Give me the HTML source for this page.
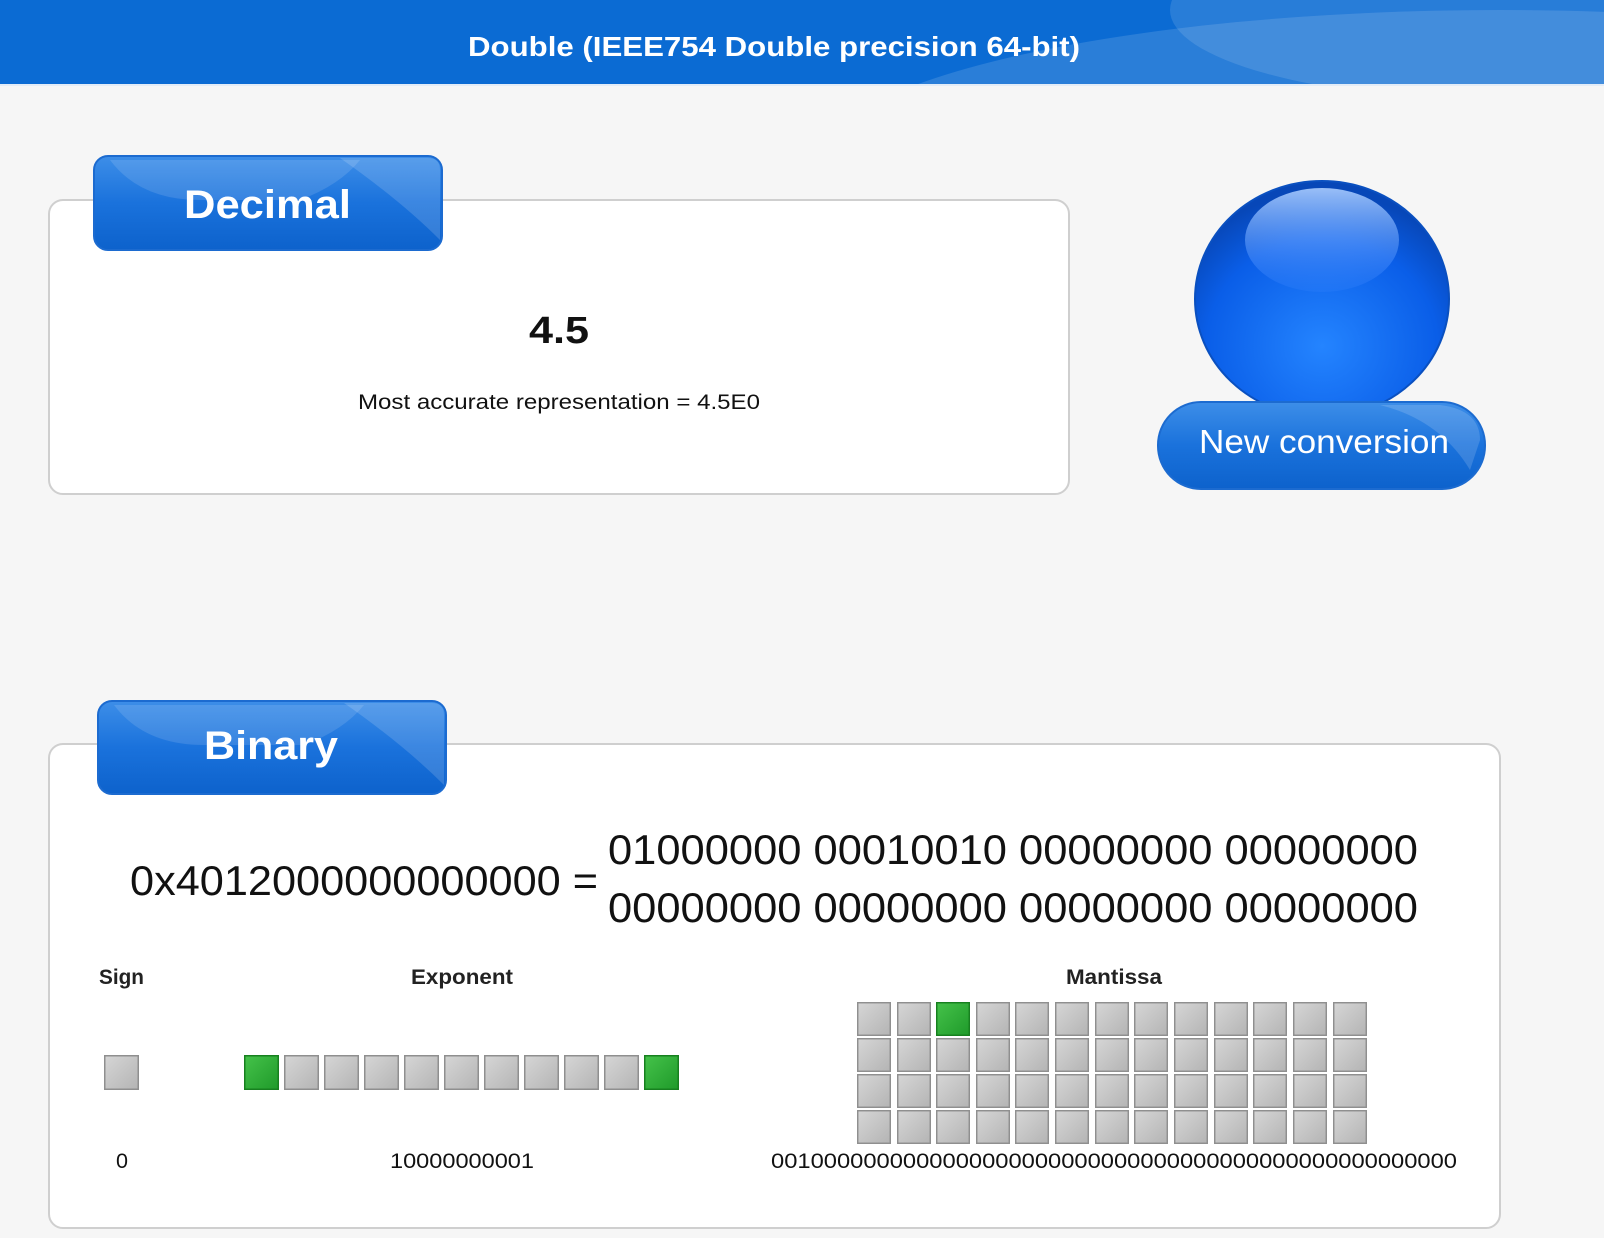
<!DOCTYPE html>
<html><head><meta charset="utf-8"><style>
html,body{margin:0;padding:0;background:#f6f6f6;}
svg{display:block}
text{font-family:"Liberation Sans",sans-serif;}
</style></head><body>
<svg width="1604" height="1238" viewBox="0 0 1604 1238" xmlns="http://www.w3.org/2000/svg">
<defs>
<clipPath id="hc"><rect x="0" y="0" width="1604" height="84"/></clipPath>
<linearGradient id="tab" x1="0" y1="0" x2="0" y2="1">
<stop offset="0" stop-color="#3d8ee8"/><stop offset="0.5" stop-color="#1a72dc"/><stop offset="1" stop-color="#0d62cc"/>
</linearGradient>
<radialGradient id="ball" cx="0.5" cy="0.7" r="0.65">
<stop offset="0" stop-color="#2484ff"/><stop offset="0.7" stop-color="#0a5ee8"/><stop offset="1" stop-color="#0747b8"/>
</radialGradient>
<linearGradient id="hl" x1="0" y1="0" x2="0" y2="1">
<stop offset="0" stop-color="#a9ccff" stop-opacity="0.9"/><stop offset="1" stop-color="#3b86ff" stop-opacity="0.2"/>
</linearGradient>
<linearGradient id="gray" x1="0" y1="0" x2="1" y2="1">
<stop offset="0" stop-color="#d6d6d6"/><stop offset="1" stop-color="#b4b4b4"/>
</linearGradient>
<linearGradient id="green" x1="0" y1="0" x2="1" y2="1">
<stop offset="0" stop-color="#45c24a"/><stop offset="1" stop-color="#1f9a2a"/>
</linearGradient>
<symbol id="g" viewBox="0 0 35 35"><rect x="0.75" y="0.75" width="33.5" height="33.5" fill="url(#gray)" stroke="#8f8f8f" stroke-width="1.5"/></symbol>
<symbol id="gr" viewBox="0 0 35 35"><rect x="0.75" y="0.75" width="33.5" height="33.5" fill="url(#green)" stroke="#17801f" stroke-width="1.5"/></symbol>
</defs>

<!-- header -->
<rect x="0" y="0" width="1604" height="84" fill="#0b6bd3"/>
<g clip-path="url(#hc)">
<ellipse cx="1500" cy="170" rx="690" ry="160" fill="#ffffff" opacity="0.13"/>
<ellipse cx="1500" cy="10" rx="330" ry="90" fill="#ffffff" opacity="0.12"/>
</g>
<rect x="0" y="84" width="1604" height="2" fill="#e3ecf7"/>
<text x="774" y="56" text-anchor="middle" font-size="28" font-weight="bold" fill="#fff" textLength="612" lengthAdjust="spacingAndGlyphs">Double (IEEE754 Double precision 64-bit)</text>

<!-- decimal box -->
<rect x="49" y="200" width="1020" height="294" rx="14" fill="#fff" stroke="#cfcfcf" stroke-width="2"/>
<rect x="94" y="156" width="348" height="94" rx="14" fill="url(#tab)" stroke="#1c6bd0" stroke-width="2"/>
<path d="M110 160 Q140 200 200 200 L300 200 Q340 185 360 160 Z" fill="#fff" opacity="0.12"/>
<path d="M340 158 Q400 200 440 240 L440 170 Q440 158 428 158 Z" fill="#fff" opacity="0.15"/>
<text x="184" y="218" font-size="40" font-weight="bold" fill="#fff" textLength="167" lengthAdjust="spacingAndGlyphs">Decimal</text>
<text x="529" y="343" font-size="38" font-weight="bold" fill="#111" textLength="60" lengthAdjust="spacingAndGlyphs">4.5</text>
<text x="358" y="409" font-size="21" fill="#111" textLength="402" lengthAdjust="spacingAndGlyphs">Most accurate representation = 4.5E0</text>

<!-- ball -->
<ellipse cx="1322" cy="299" rx="127" ry="118" fill="url(#ball)" stroke="#0a50c0" stroke-width="2"/>
<ellipse cx="1322" cy="240" rx="77" ry="52" fill="url(#hl)"/>
<rect x="1158" y="402" width="327" height="87" rx="43" fill="url(#tab)" stroke="#1c6bd0" stroke-width="2"/>
<path d="M1380 405 Q1440 420 1470 470 L1480 440 Q1480 410 1440 405 Z" fill="#fff" opacity="0.15"/>
<text x="1199" y="453" font-size="33" fill="#fff" textLength="250" lengthAdjust="spacingAndGlyphs">New conversion</text>

<!-- binary box -->
<rect x="49" y="744" width="1451" height="484" rx="14" fill="#fff" stroke="#cfcfcf" stroke-width="2"/>
<rect x="98" y="701" width="348" height="93" rx="14" fill="url(#tab)" stroke="#1c6bd0" stroke-width="2"/>
<path d="M114 705 Q144 745 204 745 L304 745 Q344 730 364 705 Z" fill="#fff" opacity="0.12"/>
<path d="M344 703 Q404 745 444 785 L444 715 Q444 703 432 703 Z" fill="#fff" opacity="0.15"/>
<text x="204" y="759" font-size="40" font-weight="bold" fill="#fff" textLength="134" lengthAdjust="spacingAndGlyphs">Binary</text>

<text x="130" y="895" font-size="42" fill="#111" textLength="468" lengthAdjust="spacingAndGlyphs">0x4012000000000000 =</text>
<text x="608" y="864" font-size="42" fill="#111" textLength="810" lengthAdjust="spacingAndGlyphs">01000000 00010010 00000000 00000000</text>
<text x="608" y="922" font-size="42" fill="#111" textLength="810" lengthAdjust="spacingAndGlyphs">00000000 00000000 00000000 00000000</text>

<text x="99" y="984" font-size="21" font-weight="bold" fill="#222" textLength="45" lengthAdjust="spacingAndGlyphs">Sign</text>
<text x="411" y="984" font-size="21" font-weight="bold" fill="#222" textLength="102" lengthAdjust="spacingAndGlyphs">Exponent</text>
<text x="1066" y="984" font-size="21" font-weight="bold" fill="#222" textLength="96" lengthAdjust="spacingAndGlyphs">Mantissa</text>

<use href="#g" x="104" y="1055" width="35" height="35"/>
<g id="exp">
<use href="#gr" x="244" y="1055" width="35" height="35"/>
<use href="#g" x="284" y="1055" width="35" height="35"/>
<use href="#g" x="324" y="1055" width="35" height="35"/>
<use href="#g" x="364" y="1055" width="35" height="35"/>
<use href="#g" x="404" y="1055" width="35" height="35"/>
<use href="#g" x="444" y="1055" width="35" height="35"/>
<use href="#g" x="484" y="1055" width="35" height="35"/>
<use href="#g" x="524" y="1055" width="35" height="35"/>
<use href="#g" x="564" y="1055" width="35" height="35"/>
<use href="#g" x="604" y="1055" width="35" height="35"/>
<use href="#gr" x="644" y="1055" width="35" height="35"/>
</g>

<g id="row0">
<use href="#g" x="857" y="1002" width="34" height="34"/>
<use href="#g" x="897" y="1002" width="34" height="34"/>
<use href="#gr" x="936" y="1002" width="34" height="34"/>
<use href="#g" x="976" y="1002" width="34" height="34"/>
<use href="#g" x="1015" y="1002" width="34" height="34"/>
<use href="#g" x="1055" y="1002" width="34" height="34"/>
<use href="#g" x="1095" y="1002" width="34" height="34"/>
<use href="#g" x="1134" y="1002" width="34" height="34"/>
<use href="#g" x="1174" y="1002" width="34" height="34"/>
<use href="#g" x="1214" y="1002" width="34" height="34"/>
<use href="#g" x="1253" y="1002" width="34" height="34"/>
<use href="#g" x="1293" y="1002" width="34" height="34"/>
<use href="#g" x="1333" y="1002" width="34" height="34"/>
</g>
<g id="rowg">
<use href="#g" x="857" y="1038" width="34" height="34"/>
<use href="#g" x="897" y="1038" width="34" height="34"/>
<use href="#g" x="936" y="1038" width="34" height="34"/>
<use href="#g" x="976" y="1038" width="34" height="34"/>
<use href="#g" x="1015" y="1038" width="34" height="34"/>
<use href="#g" x="1055" y="1038" width="34" height="34"/>
<use href="#g" x="1095" y="1038" width="34" height="34"/>
<use href="#g" x="1134" y="1038" width="34" height="34"/>
<use href="#g" x="1174" y="1038" width="34" height="34"/>
<use href="#g" x="1214" y="1038" width="34" height="34"/>
<use href="#g" x="1253" y="1038" width="34" height="34"/>
<use href="#g" x="1293" y="1038" width="34" height="34"/>
<use href="#g" x="1333" y="1038" width="34" height="34"/>
</g>
<use href="#rowg" x="0" y="36"/>
<use href="#rowg" x="0" y="72"/>

<text x="116" y="1168" font-size="21" fill="#111" textLength="12" lengthAdjust="spacingAndGlyphs">0</text>
<text x="390" y="1168" font-size="21" fill="#111" textLength="144" lengthAdjust="spacingAndGlyphs">10000000001</text>
<text x="771" y="1168" font-size="21" fill="#111" textLength="686" lengthAdjust="spacingAndGlyphs">0010000000000000000000000000000000000000000000000000</text>
</svg>
</body></html>
